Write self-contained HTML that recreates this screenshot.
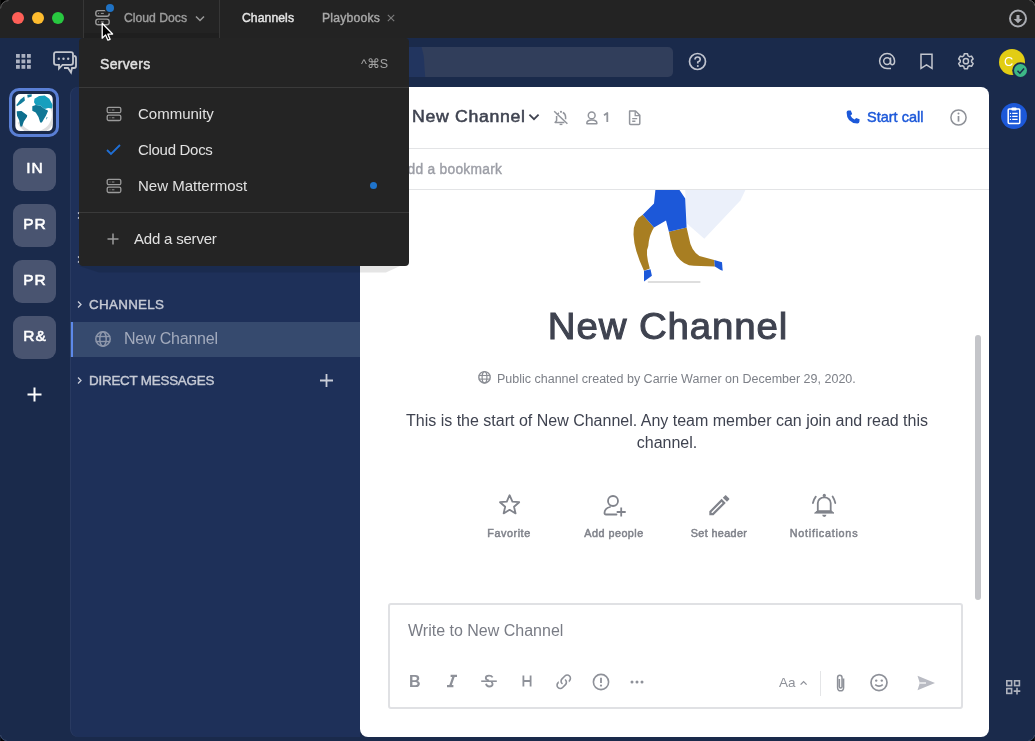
<!DOCTYPE html>
<html><head><meta charset="utf-8"><style>
html,body{margin:0;padding:0;width:1035px;height:741px;overflow:hidden;}
body{position:relative;font-family:"Liberation Sans", sans-serif;}
svg{display:block;overflow:visible;}
div{will-change:transform;}
</style></head><body>
<div style="position:absolute;left:0px;top:0px;width:1035px;height:741px;background:#1a2a4b;"></div>
<div style="position:absolute;left:0px;top:0px;width:1035px;height:38px;background:#232323;"></div>
<div style="position:absolute;left:70px;top:87px;width:290px;height:650px;background:#1e3059;border-radius:8px 0 0 8px;box-shadow:inset 1px 0 0 rgba(255,255,255,0.05);"></div>
<div style="position:absolute;left:360px;top:87px;width:629px;height:650px;background:#ffffff;border-radius:0 8px 8px 8px;"></div>
<div style="position:absolute;left:12px;top:12px;width:12px;height:12px;background:#fe5f57;border-radius:50%;"></div>
<div style="position:absolute;left:32px;top:12px;width:12px;height:12px;background:#febc2e;border-radius:50%;"></div>
<div style="position:absolute;left:52px;top:12px;width:12px;height:12px;background:#28c840;border-radius:50%;"></div>
<div style="position:absolute;left:83px;top:0px;width:1px;height:38px;background:#363636;"></div>
<div style="position:absolute;left:219px;top:0px;width:1px;height:38px;background:#363636;"></div>
<div style="position:absolute;left:84px;top:33px;width:135px;height:5px;background:#1f1f1f;"></div>
<svg style="position:absolute;left:90px;top:0px;" width="24" height="30" viewBox="0 0 24 30"><rect x="5.8" y="10.6" width="13.4" height="5.6" rx="2.3" fill="none" stroke="#9a9a9a" stroke-width="1.4"/><rect x="5.8" y="19.1" width="13.4" height="5.6" rx="2.3" fill="none" stroke="#9a9a9a" stroke-width="1.4"/><path d="M8 13.4 H8.9 M10.9 13.4 H13.8 M8 21.9 H8.9 M10.9 21.9 H13.8" stroke="#9a9a9a" stroke-width="1"/></svg>
<div style="position:absolute;left:105.9px;top:4px;width:8.2px;height:8.2px;background:#1f72c4;border-radius:50%;box-shadow:0 0 0 1.6px #232323;"></div>
<div style="position:absolute;top:11.15px;font-size:12.2px;line-height:14.64px;color:#9d9d9d;font-weight:400;white-space:nowrap;left:123.5px;-webkit-text-stroke:0.4px #9d9d9d;">Cloud Docs</div>
<svg style="position:absolute;left:194px;top:14px;" width="12" height="9" viewBox="0 0 12 9"><polyline points="2,2.5 6,6.5 10,2.5" fill="none" stroke="#9a9a9a" stroke-width="1.5"/></svg>
<div style="position:absolute;top:11.05px;font-size:12.2px;line-height:14.64px;color:#e6e6e6;font-weight:400;white-space:nowrap;letter-spacing:0.07px;left:241.5px;-webkit-text-stroke:0.4px #e6e6e6;">Channels</div>
<div style="position:absolute;top:11.05px;font-size:12.2px;line-height:14.64px;color:#a8a8a8;font-weight:400;white-space:nowrap;letter-spacing:0.21px;left:321.5px;-webkit-text-stroke:0.4px #a8a8a8;">Playbooks</div>
<svg style="position:absolute;left:386px;top:13px;" width="10" height="10" viewBox="0 0 10 10"><path d="M1.8 1.8 L8.2 8.2 M8.2 1.8 L1.8 8.2" stroke="#7c7c7c" stroke-width="1.1"/></svg>
<svg style="position:absolute;left:1008px;top:8px;" width="21" height="21" viewBox="0 0 21 21"><circle cx="10" cy="10.5" r="8" fill="none" stroke="#a9abb1" stroke-width="2"/><path d="M8.5 7.1 H11.5 V10.9 H14.3 L10 15.3 L5.7 10.9 H8.5 Z" fill="#a9abb1"/></svg>
<svg style="position:absolute;left:15px;top:53px;" width="17" height="17" viewBox="0 0 17 17"><rect x="1.0" y="1.0" width="3.8" height="3.8" fill="#abb1c1"/><rect x="1.0" y="6.5" width="3.8" height="3.8" fill="#abb1c1"/><rect x="1.0" y="12.0" width="3.8" height="3.8" fill="#abb1c1"/><rect x="6.5" y="1.0" width="3.8" height="3.8" fill="#abb1c1"/><rect x="6.5" y="6.5" width="3.8" height="3.8" fill="#abb1c1"/><rect x="6.5" y="12.0" width="3.8" height="3.8" fill="#abb1c1"/><rect x="12.0" y="1.0" width="3.8" height="3.8" fill="#abb1c1"/><rect x="12.0" y="6.5" width="3.8" height="3.8" fill="#abb1c1"/><rect x="12.0" y="12.0" width="3.8" height="3.8" fill="#abb1c1"/></svg>
<svg style="position:absolute;left:52px;top:50px;" width="26" height="25" viewBox="0 0 26 25"><path d="M4 2.2 H19 Q21 2.2 21 4.2 V12.8 Q21 14.8 19 14.8 H10.5 L7 18.5 L7 14.8 H4 Q2 14.8 2 12.8 V4.2 Q2 2.2 4 2.2 Z" fill="none" stroke="#c3c6ce" stroke-width="1.8"/><path d="M21.8 6 Q24 6 24 8 V16 Q24 18 22 18 H20 L19 22.5 L16 18 H12" fill="none" stroke="#c3c6ce" stroke-width="1.8"/><circle cx="6.8" cy="8.8" r="1.2" fill="#c3c6ce"/><circle cx="11.5" cy="8.8" r="1.2" fill="#c3c6ce"/><circle cx="16.2" cy="8.8" r="1.2" fill="#c3c6ce"/></svg>
<div style="position:absolute;left:409px;top:47px;width:264px;height:30px;background:#313e5b;border-radius:0 5px 5px 0;"></div>
<div style="position:absolute;left:409px;top:47px;width:18px;height:30px;background:#22355f;clip-path:polygon(0 0,70% 0,82% 30%,90% 100%,0 100%);"></div>
<svg style="position:absolute;left:688px;top:52px;" width="19" height="19" viewBox="0 0 19 19"><circle cx="9.5" cy="9.5" r="8" fill="none" stroke="#c0c4cf" stroke-width="1.7"/><path d="M7 7.6 Q7 5 9.6 5 Q12.2 5 12.2 7.4 Q12.2 9 9.8 10 V11.6" fill="none" stroke="#c0c4cf" stroke-width="1.7"/><circle cx="9.8" cy="13.9" r="1" fill="#c0c4cf"/></svg>
<svg style="position:absolute;left:877px;top:51px;" width="20" height="20" viewBox="0 0 20 20"><circle cx="10.1" cy="10.1" r="3.4" fill="none" stroke="#c3c6ce" stroke-width="1.5"/><path d="M13.5 6.6 V11.4 Q13.5 13.7 15.5 13.7 Q17.6 13.7 17.6 10.1 A7.5 7.5 0 1 0 10.1 17.6 H14" fill="none" stroke="#c3c6ce" stroke-width="1.5"/></svg>
<svg style="position:absolute;left:918px;top:52px;" width="17" height="19" viewBox="0 0 17 19"><path d="M3 2.3 H14 V16.3 L8.5 12.9 L3 16.3 Z" fill="none" stroke="#c3c6ce" stroke-width="1.5" stroke-linejoin="miter"/></svg>
<svg style="position:absolute;left:956px;top:51px;" width="20" height="20" viewBox="0 0 20 20"><polygon points="7.76,4.92 8.32,2.77 11.48,2.77 12.04,4.92 13.41,5.71 15.55,5.11 17.13,7.85 15.54,9.41 15.54,10.99 17.13,12.55 15.55,15.29 13.41,14.69 12.04,15.48 11.48,17.63 8.32,17.63 7.76,15.48 6.39,14.69 4.25,15.29 2.67,12.55 4.26,10.99 4.26,9.41 2.67,7.85 4.25,5.11 6.39,5.71" fill="none" stroke="#c3c6ce" stroke-width="1.5" stroke-linejoin="round"/><circle cx="9.9" cy="10.2" r="2.6" fill="none" stroke="#c3c6ce" stroke-width="1.5"/></svg>
<div style="position:absolute;left:999px;top:48.8px;width:26.2px;height:26.2px;background:#e2cd14;border-radius:50%;"></div>
<div style="position:absolute;top:54.09px;font-size:12.8px;line-height:15.36px;color:#ffffff;font-weight:400;white-space:nowrap;left:1004.2px;">C</div>
<div style="position:absolute;left:1013.7px;top:63.7px;width:13.4px;height:13.4px;background:#3db887;border-radius:50%;box-shadow:0 0 0 1.8px #1a2a4b;"></div>
<svg style="position:absolute;left:1013.7px;top:63.7px;" width="14" height="14" viewBox="0 0 14 14"><polyline points="3.5,6.8 5.9,9.2 10.1,4.4" fill="none" stroke="#1a2a4b" stroke-width="1.5"/></svg>
<div style="position:absolute;left:9px;top:88px;width:50px;height:49px;border:3px solid #5a7fd5;border-radius:10px;box-sizing:border-box;"></div>
<svg style="position:absolute;left:15px;top:94px;" width="38" height="37" viewBox="0 0 38 37"><defs><clipPath id="gc"><rect x="0.3" y="0" width="37.4" height="37.1" rx="5"/></clipPath></defs><rect x="0.3" y="0" width="37.4" height="37.1" rx="5" fill="#ffffff"/><g clip-path="url(#gc)"><path d="M4 28 A17 17 0 0 0 37 14" fill="none" stroke="#dedede" stroke-width="3.2"/><path d="M1.7 17.3 L6.5 17 L12.2 21.2 L11.9 22.9 L8.8 27.5 L7.1 32.6 L5.4 32.6 L4.2 26.3 L2 21.8 Z" fill="#0d6f8e"/><path d="M17.3 12.2 L20.7 11 L25.2 11.6 L29.7 15 L33.1 16.7 L30.9 21.8 L29.2 24.6 L26.9 28.6 L25.2 28.6 L23.5 22.9 L20.7 18.4 L17.3 16.7 Z" fill="#107896"/><path d="M19.5 4.8 L24.1 2 L29.7 1.4 L34.3 4.8 L37.7 11 L37.1 14.4 L33.1 13.9 L29.7 15 L25.2 11.6 L20.7 11 L19 8.2 Z" fill="#179fbe"/><path d="M1.4 11 L5.4 5.4 L9.3 2.5 L9.9 6.5 L6.5 9.3 L2 12.2 Z" fill="#127d9c"/><path d="M12.2 0.8 L16.7 0.3 L16.7 2.5 L12.7 3.7 Z" fill="#127d9c"/><path d="M31.4 23.5 L32.6 23 L31.4 25.8 Z" fill="#107896"/></g></svg>
<div style="position:absolute;left:13px;top:148px;width:43px;height:43px;background:#495470;border-radius:9px;"></div>
<div style="position:absolute;top:159.18px;font-size:15.5px;line-height:18.6px;color:#ffffff;font-weight:400;white-space:nowrap;letter-spacing:0.9px;left:-465.1px;width:1000px;text-align:center;-webkit-text-stroke:0.55px #ffffff;">IN</div>
<div style="position:absolute;left:13px;top:204px;width:43px;height:43px;background:#495470;border-radius:9px;"></div>
<div style="position:absolute;top:215.18px;font-size:15.5px;line-height:18.6px;color:#ffffff;font-weight:400;white-space:nowrap;letter-spacing:0.9px;left:-465.1px;width:1000px;text-align:center;-webkit-text-stroke:0.55px #ffffff;">PR</div>
<div style="position:absolute;left:13px;top:260px;width:43px;height:43px;background:#495470;border-radius:9px;"></div>
<div style="position:absolute;top:271.18px;font-size:15.5px;line-height:18.6px;color:#ffffff;font-weight:400;white-space:nowrap;letter-spacing:0.9px;left:-465.1px;width:1000px;text-align:center;-webkit-text-stroke:0.55px #ffffff;">PR</div>
<div style="position:absolute;left:13px;top:316px;width:43px;height:43px;background:#495470;border-radius:9px;"></div>
<div style="position:absolute;top:327.18px;font-size:15.5px;line-height:18.6px;color:#ffffff;font-weight:400;white-space:nowrap;letter-spacing:0.9px;left:-465.1px;width:1000px;text-align:center;-webkit-text-stroke:0.55px #ffffff;">R&amp;</div>
<svg style="position:absolute;left:26px;top:386px;" width="17" height="17" viewBox="0 0 17 17"><path d="M8.5 1.5 V15.5 M1.5 8.5 H15.5" stroke="#ffffff" stroke-width="2"/></svg>
<svg style="position:absolute;left:76px;top:211px;" width="7" height="9" viewBox="0 0 7 9"><polyline points="2,1.5 5,4.5 2,7.5" fill="none" stroke="#c8ccd8" stroke-width="1.3"/></svg>
<svg style="position:absolute;left:76px;top:255px;" width="7" height="9" viewBox="0 0 7 9"><polyline points="2,1.5 5,4.5 2,7.5" fill="none" stroke="#c8ccd8" stroke-width="1.3"/></svg>
<svg style="position:absolute;left:76px;top:300px;" width="7" height="9" viewBox="0 0 7 9"><polyline points="2,1.5 5,4.5 2,7.5" fill="none" stroke="#c8ccd8" stroke-width="1.3"/></svg>
<div style="position:absolute;top:297.03px;font-size:13.4px;line-height:16.08px;color:#c6cad5;font-weight:400;white-space:nowrap;letter-spacing:0.3px;left:89px;-webkit-text-stroke:0.4px #c6cad5;">CHANNELS</div>
<div style="position:absolute;left:70px;top:322px;width:290px;height:35px;background:#364a6e;"></div>
<div style="position:absolute;left:71px;top:322px;width:2px;height:35px;background:#5d89ea;"></div>
<svg style="position:absolute;left:94px;top:330px;" width="18" height="18" viewBox="0 0 18 18"><circle cx="9" cy="9" r="7.2" fill="none" stroke="#8e97ab" stroke-width="1.5"/><ellipse cx="9" cy="9" rx="3.2" ry="7.2" fill="none" stroke="#8e97ab" stroke-width="1.5"/><line x1="1.8" y1="6.5" x2="16.2" y2="6.5" stroke="#8e97ab" stroke-width="1.4"/><line x1="1.8" y1="11.5" x2="16.2" y2="11.5" stroke="#8e97ab" stroke-width="1.4"/></svg>
<div style="position:absolute;top:329.21px;font-size:16px;line-height:19.2px;color:#a3abbd;font-weight:400;white-space:nowrap;letter-spacing:-0.2px;left:124px;">New Channel</div>
<svg style="position:absolute;left:76px;top:376px;" width="7" height="9" viewBox="0 0 7 9"><polyline points="2,1.5 5,4.5 2,7.5" fill="none" stroke="#c8ccd8" stroke-width="1.3"/></svg>
<div style="position:absolute;top:372.53px;font-size:13.4px;line-height:16.08px;color:#c6cad5;font-weight:400;white-space:nowrap;letter-spacing:-0.22px;left:89px;-webkit-text-stroke:0.4px #c6cad5;">DIRECT MESSAGES</div>
<svg style="position:absolute;left:319px;top:373px;" width="15" height="15" viewBox="0 0 15 15"><path d="M7.5 1 V14 M1 7.5 H14" stroke="#c9cdd8" stroke-width="1.8"/></svg>
<div style="position:absolute;top:107.60px;font-size:15.8px;line-height:18.96px;color:#3f4350;font-weight:400;white-space:nowrap;letter-spacing:0.6px;left:412px;transform:scaleX(1.12);transform-origin:left;-webkit-text-stroke:0.5px #3f4350;">New Channel</div>
<svg style="position:absolute;left:527px;top:111px;" width="14" height="10" viewBox="0 0 14 10"><polyline points="2.4,3.6 7,8.2 11.6,3.6" fill="none" stroke="#3f4350" stroke-width="1.8"/></svg>
<svg style="position:absolute;left:552px;top:109px;" width="18" height="18" viewBox="0 0 18 18"><path d="M5.2 6 Q5.6 4.6 7 3.8 M10.8 3.5 Q13.5 4.6 13.6 8 V10.2" fill="none" stroke="#92959c" stroke-width="1.5"/><path d="M4.6 7 V11.6 L3.1 13.5 H12.4" fill="none" stroke="#92959c" stroke-width="1.5" stroke-linejoin="round"/><circle cx="9" cy="2.8" r="1.1" fill="#92959c"/><path d="M7.6 15.4 H10.4" stroke="#92959c" stroke-width="1.4"/><path d="M2.2 2.2 L15.4 14.8" stroke="#92959c" stroke-width="1.5"/></svg>
<svg style="position:absolute;left:585px;top:108px;" width="16" height="18" viewBox="0 0 16 18"><circle cx="6.7" cy="7.4" r="3.4" fill="none" stroke="#92959c" stroke-width="1.5"/><path d="M1.8 15.2 Q1.8 11.9 6.8 11.9 Q11.9 11.9 11.9 15.2 Q11.9 15.7 11.4 15.7 H2.3 Q1.8 15.7 1.8 15.2 Z" fill="none" stroke="#92959c" stroke-width="1.5" stroke-linejoin="round"/></svg>
<svg style="position:absolute;left:602px;top:111px;" width="8" height="13" viewBox="0 0 8 13"><path d="M2 4.2 L5.3 2 V11" fill="none" stroke="#92959c" stroke-width="1.8" stroke-linejoin="round"/></svg>
<svg style="position:absolute;left:627px;top:109px;" width="15" height="17" viewBox="0 0 15 17"><path d="M2.6 2 H8.5 L12.8 6.3 V14.4 Q12.8 15.4 11.8 15.4 H3.6 Q2.6 15.4 2.6 14.4 Z" fill="none" stroke="#92959c" stroke-width="1.5" stroke-linejoin="round"/><path d="M8.2 2.2 V6.6 H12.6" fill="none" stroke="#92959c" stroke-width="1.3"/><path d="M5.2 9.6 H10.2 M5.2 12.2 H8.4" stroke="#92959c" stroke-width="1.4"/></svg>
<svg style="position:absolute;left:845px;top:109px;" width="16" height="16" viewBox="0 0 16 16"><path d="M3.3 1.6 L5.8 1.4 L7.2 5 L5.5 6.5 Q6.8 9.4 9.6 10.6 L11.1 8.9 L14.6 10.3 L14.4 12.8 Q14.2 14.4 12.4 14.4 Q1.6 13.8 1.6 3.4 Q1.6 1.7 3.3 1.6 Z" fill="#1c58d9"/></svg>
<div style="position:absolute;top:109.11px;font-size:14.5px;line-height:17.4px;color:#1c58d9;font-weight:400;white-space:nowrap;left:866.5px;-webkit-text-stroke:0.45px #1c58d9;">Start call</div>
<svg style="position:absolute;left:949px;top:108px;" width="19" height="19" viewBox="0 0 19 19"><circle cx="9.5" cy="9.5" r="7.6" fill="none" stroke="#8e9198" stroke-width="1.5"/><path d="M9.5 8 V13.6" stroke="#8e9198" stroke-width="1.7"/><circle cx="9.5" cy="5.6" r="1" fill="#8e9198"/></svg>
<div style="position:absolute;left:360px;top:148px;width:629px;height:1px;background:#e3e4e6;"></div>
<div style="position:absolute;top:161.76px;font-size:13.8px;line-height:16.56px;color:#9c9ea6;font-weight:400;white-space:nowrap;letter-spacing:0.27px;left:398px;-webkit-text-stroke:0.4px #9c9ea6;">Add a bookmark</div>
<div style="position:absolute;left:360px;top:189px;width:629px;height:1px;background:#e3e4e6;"></div>
<svg style="position:absolute;left:620px;top:190px;" width="140" height="100" viewBox="0 0 140 100"><path d="M65.2 0 H125.4 L120.4 10.6 L84.3 48.8 L66.6 33.3 Z" fill="#ebf0fa"/><path d="M22.7 24.8 Q13 30 13.5 44.6 Q14 60 24 80.7 L29.8 78.6 Q25 62 28.3 56 Q29 45 34 37.5 Z" fill="#a87e22"/><path d="M48.9 41.8 Q52 60 56.7 65.9 Q64 75.8 73.7 75.8 L94.9 76.5 L94.2 70.1 L79.4 65.9 Q70.9 60.5 69 48 L66.6 37.5 Z" fill="#a87e22"/><path d="M35.4 0 L34 13.4 L22.7 24.8 L34 37.5 L46 30.4 L48.9 41.8 L66.6 37.5 L65.2 8.5 L59.5 0 Z" fill="#1c58d9"/><path d="M24 80.7 L30.5 79.3 L31.9 85.7 L24 91.4 Z" fill="#1c58d9"/><path d="M94.2 70.1 L102 72.2 L102.7 80.7 L100.6 80 L94.9 76.5 Z" fill="#1c58d9"/><rect x="27.6" y="91" width="53" height="2" rx="1" fill="#dedede"/></svg>
<div style="position:absolute;top:305.22px;font-size:36.3px;line-height:43.56px;color:#3f4350;font-weight:400;white-space:nowrap;letter-spacing:0.8px;left:167.5px;width:1000px;text-align:center;transform:scaleX(1.06);transform-origin:center;-webkit-text-stroke:1.0px #3f4350;">New Channel</div>
<svg style="position:absolute;left:477px;top:370px;" width="16" height="16" viewBox="0 0 16 16"><circle cx="7.5" cy="7.3" r="5.7" fill="none" stroke="#8a8d94" stroke-width="1.4"/><ellipse cx="7.5" cy="7.3" rx="2.4" ry="5.7" fill="none" stroke="#8a8d94" stroke-width="1.2"/><line x1="1.8" y1="5.5" x2="13.2" y2="5.5" stroke="#8a8d94" stroke-width="1.1"/><line x1="1.8" y1="9.1" x2="13.2" y2="9.1" stroke="#8a8d94" stroke-width="1.1"/></svg>
<div style="position:absolute;top:371.87px;font-size:12.5px;line-height:15.0px;color:#7d8088;font-weight:400;white-space:nowrap;left:497px;">Public channel created by Carrie Warner on December 29, 2020.</div>
<div style="position:absolute;top:411.31px;font-size:16px;line-height:19.2px;color:#3f4350;font-weight:400;white-space:nowrap;left:166.5px;width:1000px;text-align:center;">This is the start of New Channel. Any team member can join and read this</div>
<div style="position:absolute;top:433.31px;font-size:16px;line-height:19.2px;color:#3f4350;font-weight:400;white-space:nowrap;left:166.5px;width:1000px;text-align:center;">channel.</div>
<svg style="position:absolute;left:497.8px;top:493.2px;" width="24" height="23" viewBox="0 0 24 23"><path d="M11.6 2.2 L14.4 8.6 L21.2 9.2 L16 13.7 L17.6 20.4 L11.6 16.8 L5.6 20.4 L7.2 13.7 L2 9.2 L8.8 8.6 Z" fill="none" stroke="#80838b" stroke-width="1.8" stroke-linejoin="round"/></svg>
<div style="position:absolute;top:526.55px;font-size:10.8px;line-height:12.96px;color:#80838b;font-weight:400;white-space:nowrap;letter-spacing:0.56px;left:9px;width:1000px;text-align:center;-webkit-text-stroke:0.5px #80838b;">Favorite</div>
<svg style="position:absolute;left:601.8px;top:493.5px;" width="26" height="24" viewBox="0 0 26 24"><circle cx="11" cy="7" r="5" fill="none" stroke="#80838b" stroke-width="1.8"/><path d="M14.5 20.5 H4 Q2.5 20.5 2.5 19 Q2.5 14.5 8 13" fill="none" stroke="#80838b" stroke-width="1.8" stroke-linecap="round"/><path d="M19.2 13.5 V22.5 M14.7 18 H23.7" stroke="#80838b" stroke-width="1.8"/></svg>
<div style="position:absolute;top:527.35px;font-size:10.8px;line-height:12.96px;color:#80838b;font-weight:400;white-space:nowrap;letter-spacing:0.48px;left:114px;width:1000px;text-align:center;-webkit-text-stroke:0.5px #80838b;">Add people</div>
<svg style="position:absolute;left:705.7px;top:491.7px;" width="27" height="27" viewBox="0 0 27 27"><g transform="scale(1.11)"><path d="M14.06,9L15,9.94L5.92,19H5V18.08L14.06,9M17.66,3C17.41,3 17.15,3.1 16.96,3.29L15.13,5.12L18.88,8.87L20.71,7.04C21.1,6.65 21.1,6 20.71,5.63L18.37,3.29C18.170,3.09 17.92,3 17.66,3M14.06,6.19L3,17.25V21H6.75L17.81,9.94L14.06,6.19Z" fill="#80838b"/></g></svg>
<div style="position:absolute;top:526.55px;font-size:10.8px;line-height:12.96px;color:#80838b;font-weight:400;white-space:nowrap;letter-spacing:0.36px;left:219px;width:1000px;text-align:center;-webkit-text-stroke:0.5px #80838b;">Set header</div>
<svg style="position:absolute;left:811px;top:492px;" width="26" height="26" viewBox="0 0 26 26"><circle cx="13.3" cy="3.4" r="1.6" fill="#80838b"/><path d="M6.8 19.6 V11 A6.45 5.6 0 0 1 19.7 11 V19.6" fill="none" stroke="#80838b" stroke-width="1.8"/><path d="M3.6 21.1 L6.4 18.8 H20.1 L22.9 21.1 Z" fill="#80838b" stroke="#80838b" stroke-width="1" stroke-linejoin="round"/><path d="M11.2 22.8 A2.1 2.1 0 0 0 15.4 22.8 Z" fill="#80838b"/><path d="M4.8 4.6 Q2.7 7.4 1.9 11 M21.6 4.4 Q23.6 7.4 24.3 11" fill="none" stroke="#80838b" stroke-width="1.8" stroke-linecap="round"/></svg>
<div style="position:absolute;top:526.55px;font-size:10.8px;line-height:12.96px;color:#80838b;font-weight:400;white-space:nowrap;letter-spacing:0.75px;left:324.29999999999995px;width:1000px;text-align:center;-webkit-text-stroke:0.5px #80838b;">Notifications</div>
<div style="position:absolute;left:975px;top:335px;width:6px;height:265px;background:#c4c5c9;border-radius:3px;"></div>
<div style="position:absolute;left:388px;top:603px;width:575px;height:106px;border:2px solid #e0e1e4;border-radius:3px;box-sizing:border-box;"></div>
<div style="position:absolute;top:621.21px;font-size:16px;line-height:19.2px;color:#797c85;font-weight:400;white-space:nowrap;left:407.5px;">Write to New Channel</div>
<div style="position:absolute;top:671.81px;font-size:16px;line-height:19.2px;color:#8e9199;font-weight:700;white-space:nowrap;left:409.4px;">B</div>
<svg style="position:absolute;left:444px;top:673.2px;" width="16" height="16" viewBox="0 0 16 16"><path d="M6.6 2.9 H13 M3 13.2 H9.4 M9.8 2.9 L6.2 13.2" fill="none" stroke="#8e9199" stroke-width="2.3"/></svg>
<svg style="position:absolute;left:480px;top:672.8px;" width="18" height="16" viewBox="0 0 18 16"><path d="M12.6 4.4 Q11.6 2.6 9 2.6 Q5.8 2.6 5.8 5 Q5.8 6.8 9 7.6 M6 10.8 Q6.6 13.5 9.2 13.5 Q12.6 13.5 12.6 11 Q12.6 9.8 11.2 9" fill="none" stroke="#8e9199" stroke-width="1.8"/><path d="M1.2 8.2 H16.8" stroke="#8e9199" stroke-width="1.6"/></svg>
<svg style="position:absolute;left:521px;top:673.2px;" width="12" height="16" viewBox="0 0 12 16"><path d="M2.4 2.6 V13.6 M9.6 2.6 V13.6 M2.4 8 H9.6" stroke="#8e9199" stroke-width="1.8"/></svg>
<svg style="position:absolute;left:554px;top:672px;" width="19.5" height="19.5" viewBox="0 0 19.5 19.5"><g transform="scale(0.8125)"><path d="M10.59,13.41C11,13.8 11,14.44 10.59,14.83C10.2,15.22 9.56,15.22 9.17,14.83C7.22,12.88 7.22,9.71 9.17,7.76V7.76L12.71,4.22C14.66,2.27 17.83,2.27 19.78,4.22C21.73,6.17 21.73,9.34 19.78,11.29L18.29,12.78C18.3,11.96 18.17,11.14 17.89,10.36L18.36,9.88C19.54,8.71 19.54,6.81 18.36,5.64C17.19,4.46 15.29,4.46 14.12,5.64L10.59,9.17C9.41,10.34 9.41,12.24 10.59,13.41M13.41,9.17C13.8,8.78 14.44,8.78 14.83,9.17C16.78,11.12 16.78,14.29 14.83,16.24V16.24L11.29,19.78C9.34,21.73 6.170,21.73 4.22,19.78C2.27,17.83 2.27,14.66 4.22,12.71L5.71,11.22C5.7,12.04 5.83,12.86 6.11,13.650L5.64,14.12C4.46,15.29 4.46,17.19 5.64,18.36C6.81,19.54 8.71,19.54 9.88,18.36L13.41,14.83C14.59,13.66 14.59,11.76 13.41,10.59C13,10.2 13,9.56 13.41,9.17Z" fill="#8e9199"/></g></svg>
<svg style="position:absolute;left:592px;top:673px;" width="18" height="18" viewBox="0 0 18 18"><circle cx="9" cy="9" r="7.6" fill="none" stroke="#8e9199" stroke-width="1.6"/><path d="M9 4.8 V10" stroke="#8e9199" stroke-width="1.8"/><circle cx="9" cy="12.6" r="1.1" fill="#8e9199"/></svg>
<svg style="position:absolute;left:629px;top:678px;" width="16" height="8" viewBox="0 0 16 8"><circle cx="3" cy="4" r="1.5" fill="#8e9199"/><circle cx="8" cy="4" r="1.5" fill="#8e9199"/><circle cx="13" cy="4" r="1.5" fill="#8e9199"/></svg>
<div style="position:absolute;top:675.44px;font-size:13.5px;line-height:16.2px;color:#8e9199;font-weight:400;white-space:nowrap;left:779px;">Aa</div>
<svg style="position:absolute;left:799px;top:679px;" width="10" height="8" viewBox="0 0 10 8"><polyline points="1.6,5.6 4.6,2.6 7.6,5.6" fill="none" stroke="#8e9199" stroke-width="1.3"/></svg>
<div style="position:absolute;left:820px;top:671px;width:1px;height:25px;background:#e4e5e7;"></div>
<svg style="position:absolute;left:834px;top:673px;" width="14" height="20" viewBox="0 0 14 20"><path d="M9.6 5.6 V14.4 Q9.6 17.8 6.6 17.8 Q3.6 17.8 3.6 14.4 V4.6 Q3.6 2.2 5.8 2.2 Q8 2.2 8 4.6 V13.8 Q8 15 6.6 15 Q5.4 15 5.4 13.8 V6" fill="none" stroke="#8e9199" stroke-width="1.5"/></svg>
<svg style="position:absolute;left:869px;top:673px;" width="20" height="20" viewBox="0 0 20 20"><circle cx="10" cy="9.6" r="8" fill="none" stroke="#8e9199" stroke-width="1.7"/><circle cx="7.2" cy="7.6" r="1.2" fill="#8e9199"/><circle cx="12.8" cy="7.6" r="1.2" fill="#8e9199"/><path d="M6.2 11.6 Q10 14.8 13.8 11.6" fill="none" stroke="#8e9199" stroke-width="1.6"/></svg>
<svg style="position:absolute;left:916px;top:674px;" width="20" height="18" viewBox="0 0 20 18"><path d="M1.5 1.8 L19 9 L1.5 16.2 L3.8 9 Z" fill="#b9bbc3"/><path d="M3.8 9 H10" stroke="#ffffff" stroke-width="1.2"/></svg>
<div style="position:absolute;left:1001px;top:103px;width:26px;height:26px;background:#1c58d9;border-radius:50%;"></div>
<svg style="position:absolute;left:1004px;top:105px;" width="20" height="22" viewBox="0 0 20 22"><rect x="4.2" y="4" width="11.6" height="14.6" rx="1" fill="none" stroke="#ffffff" stroke-width="1.5"/><rect x="7.4" y="2.6" width="5.2" height="3" rx="1" fill="#ffffff"/><path d="M8.2 8.4 H13.6 M8.2 11.4 H13.6 M8.2 14.4 H13.6" stroke="#ffffff" stroke-width="1.3"/><circle cx="6.5" cy="11.4" r="0.7" fill="#fff"/><circle cx="6.5" cy="14.4" r="0.7" fill="#fff"/><circle cx="6.5" cy="8.4" r="0.7" fill="#fff"/></svg>
<svg style="position:absolute;left:1005px;top:679px;" width="17" height="17" viewBox="0 0 17 17"><rect x="1.8" y="1.8" width="4.8" height="4.8" fill="none" stroke="#aeb2bd" stroke-width="1.6"/><rect x="9.6" y="1.8" width="4.8" height="4.8" fill="none" stroke="#aeb2bd" stroke-width="1.6"/><rect x="1.8" y="9.6" width="4.8" height="4.8" fill="none" stroke="#aeb2bd" stroke-width="1.6"/><path d="M12 8.8 V15.4 M8.7 12.1 H15.3" stroke="#aeb2bd" stroke-width="1.6"/></svg>
<div style="position:absolute;left:79px;top:266px;width:330px;height:6.5px;background:rgba(0,0,0,0.1);clip-path:polygon(0 0,97.3% 0,93% 100%,6% 100%);"></div>
<div style="position:absolute;left:79px;top:38px;width:330px;height:228px;background:#242424;border-radius:4px 4px 4px 4px;"></div>
<div style="position:absolute;top:56.47px;font-size:14px;line-height:16.8px;color:#e1e1e1;font-weight:400;white-space:nowrap;letter-spacing:0.33px;left:100px;-webkit-text-stroke:0.45px #e1e1e1;">Servers</div>
<div style="position:absolute;top:57.17px;font-size:12.5px;line-height:15.0px;color:#a5a5a5;font-weight:400;white-space:nowrap;right:647px;">^⌘S</div>
<div style="position:absolute;left:79px;top:87px;width:330px;height:1px;background:#3a3a3a;"></div>
<svg style="position:absolute;left:105.5px;top:105.5px;" width="16" height="16" viewBox="0 0 16 16"><rect x="1.2" y="1.3" width="13.6" height="5.4" rx="1.5" fill="none" stroke="#9b9b9b" stroke-width="1.3"/><rect x="1.2" y="9.1" width="13.6" height="5.4" rx="1.5" fill="none" stroke="#9b9b9b" stroke-width="1.3"/><path d="M3.6 4 H4.4 M5.8 4 H8.4 M3.6 11.8 H4.4 M5.8 11.8 H8.4" stroke="#9b9b9b" stroke-width="0.9"/></svg>
<div style="position:absolute;top:104.84px;font-size:15px;line-height:18.0px;color:#e1e1e1;font-weight:400;white-space:nowrap;left:138px;">Community</div>
<svg style="position:absolute;left:105px;top:143px;" width="17" height="14" viewBox="0 0 17 14"><polyline points="2,7 6,11 15,2" fill="none" stroke="#1f6fd6" stroke-width="1.8"/></svg>
<div style="position:absolute;top:140.84px;font-size:15px;line-height:18.0px;color:#e1e1e1;font-weight:400;white-space:nowrap;letter-spacing:-0.3px;left:138px;">Cloud Docs</div>
<svg style="position:absolute;left:105.5px;top:177.5px;" width="16" height="16" viewBox="0 0 16 16"><rect x="1.2" y="1.3" width="13.6" height="5.4" rx="1.5" fill="none" stroke="#9b9b9b" stroke-width="1.3"/><rect x="1.2" y="9.1" width="13.6" height="5.4" rx="1.5" fill="none" stroke="#9b9b9b" stroke-width="1.3"/><path d="M3.6 4 H4.4 M5.8 4 H8.4 M3.6 11.8 H4.4 M5.8 11.8 H8.4" stroke="#9b9b9b" stroke-width="0.9"/></svg>
<div style="position:absolute;top:176.84px;font-size:15px;line-height:18.0px;color:#e1e1e1;font-weight:400;white-space:nowrap;left:138px;">New Mattermost</div>
<div style="position:absolute;left:370px;top:182px;width:7px;height:7px;background:#1f74cc;border-radius:50%;"></div>
<div style="position:absolute;left:79px;top:212px;width:330px;height:1px;background:#3a3a3a;"></div>
<svg style="position:absolute;left:106px;top:232px;" width="14" height="14" viewBox="0 0 14 14"><path d="M7 1.5 V12.5 M1.5 7 H12.5" stroke="#9b9b9b" stroke-width="1.5"/></svg>
<div style="position:absolute;top:230.04px;font-size:15px;line-height:18.0px;color:#e1e1e1;font-weight:400;white-space:nowrap;letter-spacing:-0.2px;left:134px;">Add a server</div>
<svg style="position:absolute;left:100px;top:21px;" width="16" height="22" viewBox="0 0 16 22"><path d="M2.2 2.3 V17.2 L5.6 13.9 L7.9 19.2 L10.1 18.3 L7.9 13.2 L12.6 13 Z" fill="#000" stroke="#fff" stroke-width="1.3" stroke-linejoin="round"/></svg>
<svg style="position:absolute;left:0px;top:0px;" width="10" height="10" viewBox="0 0 10 10"><path d="M0 0 H8.5 A8 8 0 0 0 0.5 8.5 V0 Z" fill="#000"/><path d="M0.6 8.5 A8 8 0 0 1 8.5 0.6" fill="none" stroke="#5c5c5c" stroke-width="1"/></svg>
<svg style="position:absolute;left:0px;top:733px;" width="8" height="8" viewBox="0 0 8 8"><path d="M0 8 H6.5 A6 6 0 0 1 0.5 2 V8 Z" fill="#000"/><path d="M0.6 2 A6 6 0 0 0 6.5 7.5" fill="none" stroke="#3a4a6a" stroke-width="1"/></svg>
<svg style="position:absolute;left:1027px;top:733px;" width="8" height="8" viewBox="0 0 8 8"><path d="M8 8 H1.5 A6 6 0 0 0 7.5 2 V8 Z" fill="#000"/><path d="M7.4 2 A6 6 0 0 1 1.5 7.5" fill="none" stroke="#3a4a6a" stroke-width="1"/></svg>
<svg style="position:absolute;left:1029px;top:0px;" width="6" height="6" viewBox="0 0 6 6"><path d="M6 0 H0.5 A5 5 0 0 1 5.5 5 V0 Z" fill="#000"/><path d="M0.5 0.5 A5 5 0 0 1 5.5 5.5" fill="none" stroke="#5c5c5c" stroke-width="1"/></svg>
</body></html>
